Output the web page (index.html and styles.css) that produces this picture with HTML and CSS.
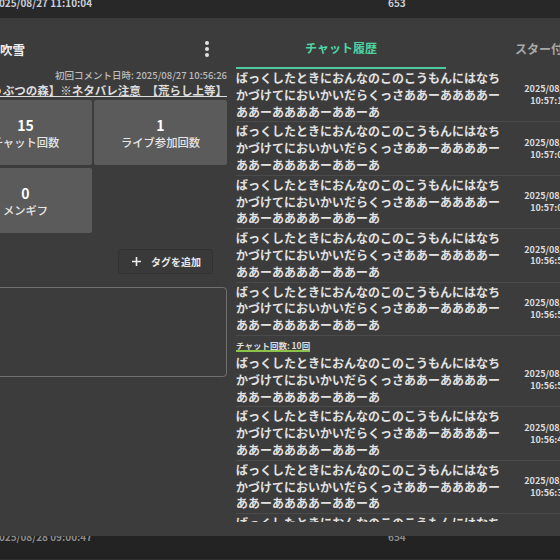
FILE: index.html
```html
<!DOCTYPE html>
<html lang="ja">
<head>
    <meta charset="UTF-8">
    <meta name="viewport" content="width=device-width, initial-scale=1.0">
    <title>視聴者詳細</title>
    <link rel="stylesheet" href="styles.css">
</head>
<body>

    <!-- Viewer table behind the dialog -->
    <div class="table">
        <div class="trow first">
            <span class="tdate">2025/08/27 11:10:04</span>
            <span class="tcount">653</span>
        </div>
        <div class="tfill"></div>
        <div class="trow last">
            <span class="tdate">2025/08/28 09:00:47</span>
            <span class="tcount">654</span>
        </div>
    </div>

    <!-- Viewer detail dialog -->
    <div class="dialog">

        <div class="profile">
            <div class="name-row">
                <div class="user">
                    <span class="avatar"></span>
                    <span class="name">吹雪</span>
                </div>
                <button class="menu-btn">
                    <svg width="6" height="18" viewBox="0 0 6 18"><circle cx="3" cy="3" r="2"/><circle cx="3" cy="9" r="2"/><circle cx="3" cy="15" r="2"/></svg>
                </button>
            </div>
            <div class="first-comment">初回コメント日時: 2025/08/27 10:56:26</div>
            <div class="stream-title"><span>【あつまれ どうぶつの森】※ネタバレ注意　【荒らし上等】</span></div>

            <div class="stats">
                <div class="stat"><div class="stat-num">15</div><div class="stat-label">チャット回数</div></div>
                <div class="stat"><div class="stat-num">1</div><div class="stat-label">ライブ参加回数</div></div>
                <div class="stat"><div class="stat-num">0</div><div class="stat-label">メンギフ</div></div>
            </div>

            <div class="tag-row">
                <button class="tag-btn">
                    <svg width="9" height="9" viewBox="0 0 9 9"><path d="M4.5 0v9M0 4.5h9"/></svg>
                    <span>タグを追加</span>
                </button>
            </div>

            <div class="memo"></div>
        </div>

        <div class="history">
            <div class="tabs">
                <div class="tab active">チャット履歴</div>
                <div class="tab">スター付履歴</div>
            </div>

            <div class="chat-list">
                <div class="chat">
                    <div class="chat-text">ばっくしたときにおんなのこのこうもんにはなちかづけてにおいかいだらくっさああーああああーああーああああーああーあ</div>
                    <div class="chat-time">2025/08/27<br>10:57:15</div>
                </div>
                <div class="chat">
                    <div class="chat-text">ばっくしたときにおんなのこのこうもんにはなちかづけてにおいかいだらくっさああーああああーああーああああーああーあ</div>
                    <div class="chat-time">2025/08/27<br>10:57:08</div>
                </div>
                <div class="chat">
                    <div class="chat-text">ばっくしたときにおんなのこのこうもんにはなちかづけてにおいかいだらくっさああーああああーああーああああーああーあ</div>
                    <div class="chat-time">2025/08/27<br>10:57:02</div>
                </div>
                <div class="chat">
                    <div class="chat-text">ばっくしたときにおんなのこのこうもんにはなちかづけてにおいかいだらくっさああーああああーああーああああーああーあ</div>
                    <div class="chat-time">2025/08/27<br>10:56:58</div>
                </div>
                <div class="chat">
                    <div class="chat-text">ばっくしたときにおんなのこのこうもんにはなちかづけてにおいかいだらくっさああーああああーああーああああーああーあ</div>
                    <div class="chat-time">2025/08/27<br>10:56:52</div>
                </div>

                <div class="chat-count"><span>チャット回数: 10回</span></div>

                <div class="chat">
                    <div class="chat-text">ばっくしたときにおんなのこのこうもんにはなちかづけてにおいかいだらくっさああーああああーああーああああーああーあ</div>
                    <div class="chat-time">2025/08/27<br>10:56:50</div>
                </div>
                <div class="chat">
                    <div class="chat-text">ばっくしたときにおんなのこのこうもんにはなちかづけてにおいかいだらくっさああーああああーああーああああーああーあ</div>
                    <div class="chat-time">2025/08/27<br>10:56:44</div>
                </div>
                <div class="chat">
                    <div class="chat-text">ばっくしたときにおんなのこのこうもんにはなちかづけてにおいかいだらくっさああーああああーああーああああーああーあ</div>
                    <div class="chat-time">2025/08/27<br>10:56:36</div>
                </div>
                <div class="chat">
                    <div class="chat-text">ばっくしたときにおんなのこのこうもんにはなちかづけてにおいかいだらくっさああーああああーああーああああーああーあ</div>
                    <div class="chat-time">2025/08/27<br>10:56:30</div>
                </div>
            </div>
        </div>

    </div>

</body>
</html>
```

FILE: styles.css
```css
/* Page */
body {
    font-family: "Noto Sans CJK JP", "Noto Sans", sans-serif;
    margin: 0;
    width: 560px;
    height: 560px;
    overflow: hidden;
    position: relative;
    background-color: #232323;
}

/* Table behind the dialog */
.table {
    display: flex;
    flex-direction: column;
    height: 560px;
}

.trow {
    display: flex;
    margin-left: -7px;
    font-size: 10px;
    font-weight: 700;
    line-height: 12px;
}

.trow.first {
    height: 21px;
    margin-top: -3px;
    background-color: #282828;
    color: #cbcfd9;
}

.trow.last {
    height: 28px;
    border-bottom: 1px solid #2e2e2e;
    color: #8c8c8c;
}

.tfill {
    flex: 1;
}

.tdate {
    width: 395px;
}

/* Dialog */
.dialog {
    position: absolute;
    top: 18px;
    left: -57px;
    width: 940px;
    height: 518px;
    box-sizing: border-box;
    padding: 12px 16px 14px;
    display: flex;
    gap: 9px;
    background-color: #3c3c3c;
    color: #e4e4e4;
}

/* Left: profile */
.profile {
    width: 268px;
    flex-shrink: 0;
}

.name-row {
    height: 38px;
    display: flex;
    align-items: center;
    justify-content: space-between;
    padding-right: 8px;
}

.user {
    display: flex;
    align-items: center;
    gap: 13px;
}

.avatar {
    width: 28px;
    height: 28px;
    border-radius: 50%;
    background-color: #6a6a6a;
}

.name {
    font-size: 12.5px;
    font-weight: 700;
    color: #eeeeee;
}

.menu-btn {
    width: 24px;
    height: 24px;
    padding: 0;
    border: none;
    background: none;
    display: flex;
    align-items: center;
    justify-content: center;
    fill: #e2e2e2;
}

.first-comment {
    text-align: right;
    font-size: 9.5px;
    font-weight: 500;
    line-height: 14px;
    color: #bdbdbd;
}

.stream-title {
    display: flex;
    justify-content: flex-end;
    white-space: nowrap;
    font-size: 11.5px;
    font-weight: 700;
    line-height: 16px;
    color: #dddddd;
}

.stream-title span {
    text-decoration: underline;
}

.stats {
    margin-top: 2px;
    display: grid;
    grid-template-columns: 133px 133px;
    grid-auto-rows: 65px;
    gap: 3px 2px;
}

.stat {
    background-color: #5b5b5b;
    border-radius: 2px;
    display: flex;
    flex-direction: column;
    align-items: center;
    justify-content: center;
}

.stat-num {
    font-size: 14px;
    font-weight: 700;
    line-height: 18px;
    color: #ffffff;
}

.stat-label {
    font-size: 11.3px;
    font-weight: 500;
    line-height: 16px;
    color: #e6e6e6;
}

.tag-row {
    margin-top: 16px;
    display: flex;
    justify-content: flex-end;
    padding-right: 14px;
}

.tag-btn {
    height: 25px;
    padding: 0 11px 0 13px;
    display: flex;
    align-items: center;
    gap: 10px;
    border: 1px solid rgba(0, 0, 0, 0.12);
    border-radius: 3px;
    background-color: rgba(0, 0, 0, 0.04);
    font-family: inherit;
    font-size: 10px;
    font-weight: 700;
    color: #e8e8e8;
    stroke: #eeeeee;
    stroke-width: 1.6;
}

.memo {
    margin-top: 13px;
    height: 90px;
    box-sizing: border-box;
    border: 1.5px solid #707070;
    border-radius: 4px;
}

/* Right: chat history */
.history {
    width: 420px;
    flex-shrink: 0;
    display: flex;
    flex-direction: column;
}

.tabs {
    display: flex;
    height: 39px;
}

.tab {
    width: 210px;
    box-sizing: border-box;
    padding-bottom: 2px;
    display: flex;
    align-items: center;
    justify-content: center;
    font-size: 12px;
    font-weight: 700;
    color: #a8a8a8;
}

.tab.active {
    color: #4dd6a3;
    border-bottom: 2.5px solid #4ec9a0;
}

.chat-list {
    flex: 1;
    overflow: hidden;
}

.chat {
    display: grid;
    grid-template-columns: 268px 90px;
    padding: 1px 0;
    border-bottom: 1px solid #4b4b4b;
}

.chat-text {
    font-size: 12px;
    font-weight: 700;
    line-height: 16.8px;
    color: #e2e2e2;
}

.chat-time {
    align-self: center;
    text-align: center;
    font-size: 9px;
    font-weight: 700;
    line-height: 11.7px;
    color: #dcdcdc;
}

.chat-count {
    display: flex;
    padding: 4px 0 2px;
}

.chat-count span {
    font-size: 8.5px;
    font-weight: 700;
    line-height: 10px;
    color: #dddddd;
    border-bottom: 2px solid #8bc34a;
}
```
